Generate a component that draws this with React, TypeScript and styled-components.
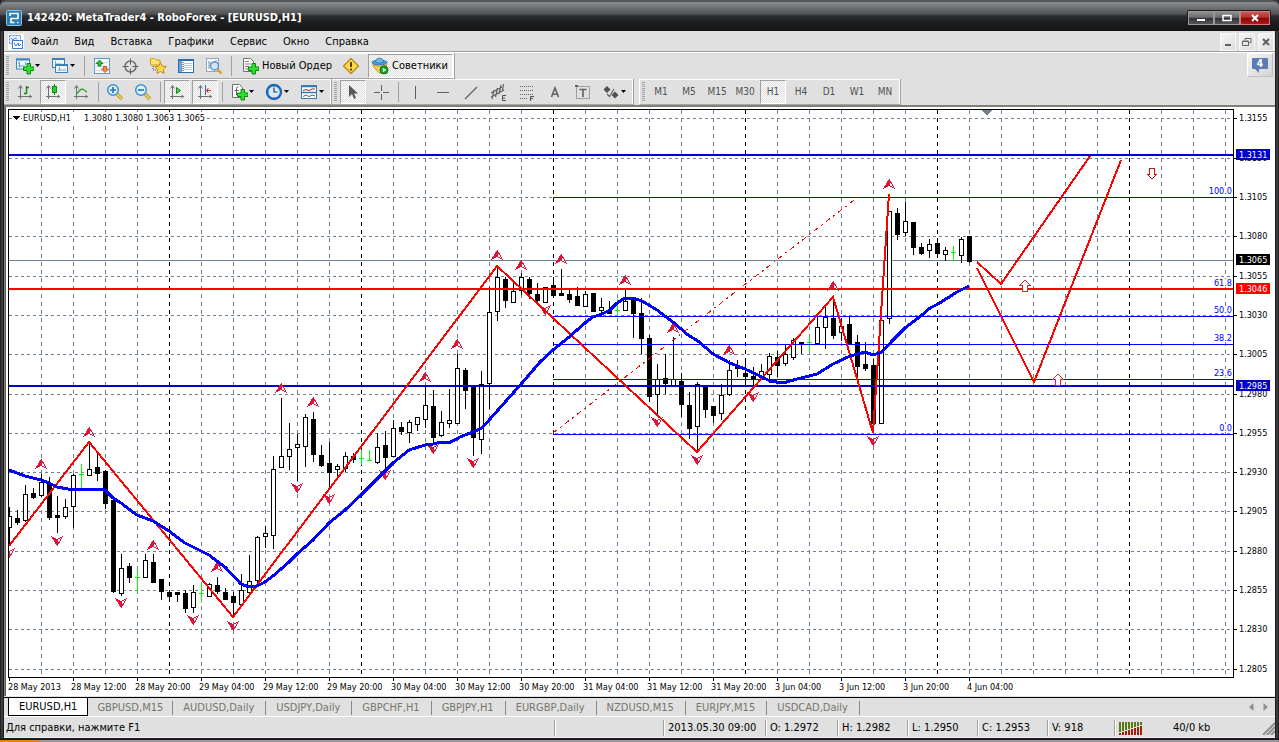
import React from 'react';
import styled, { createGlobalStyle, css } from 'styled-components';

const GlobalStyle = createGlobalStyle`
  *, *::before, *::after { box-sizing: border-box; }
  body { margin: 0; background: #1b1b1d; }
  button, input { font: inherit; }
`;

const uiFont = `'DejaVu Sans Condensed', 'DejaVu Sans', sans-serif`;

/* ---------- window frame ---------- */

const Window = styled.div`
  display: flex;
  flex-direction: column;
  min-height: 100vh;
  padding: 0 4px;
  background: linear-gradient(90deg, #141416 0, #4a4a4d 2px, #0d0d0f 4px, #0d0d0f calc(100% - 4px), #4a4a4d calc(100% - 2px), #141416 100%);
  font-family: ${uiFont};
  font-size: 11px;
  color: #000;
`;

const TitleBar = styled.header`
  display: flex;
  align-items: center;
  height: 31px;
  margin: 0 -4px;
  padding: 2px 8px 0 6px;
  gap: 5px;
  border-top: 2px solid #55565a;
  border-radius: 6px 6px 0 0;
  background: linear-gradient(#8a8b8d 0, #77787a 4px, #515254 12px, #2c2d2e 14px, #1d1e1f 20px, #141415 100%);
  color: #fff;
`;

const TitleText = styled.h1`
  flex: 1;
  margin: 0;
  font-size: 11px;
  font-weight: bold;
  line-height: 16px;
  white-space: nowrap;
`;

const WindowButtons = styled.div`
  display: flex;
  padding: 1px;
  border-radius: 2px;
  background: #1a1a1b;
`;

const WindowButton = styled.button<{ $close?: boolean }>`
  display: flex;
  align-items: center;
  justify-content: center;
  width: ${p => (p.$close ? 30 : 26)}px;
  height: 14px;
  padding: 0;
  border: 1px solid ${p => (p.$close ? '#d87878' : '#9a9a9c')};
  background: ${p =>
    p.$close
      ? 'linear-gradient(#c65a5a 0, #b03030 45%, #8c0404 50%, #b01818 100%)'
      : 'linear-gradient(#8d8e90 0, #6a6b6d 45%, #303133 50%, #55565a 100%)'};
`;

const Face = styled.div`
  display: flex;
  flex-direction: column;
  flex: 1;
  background: #e0e0e0;
`;

/* ---------- menu ---------- */

const MenuBar = styled.nav`
  display: flex;
  align-items: center;
  height: 22px;
  padding: 0 1px 0 4px;
  border-bottom: 1px solid #fff;
  box-shadow: inset 0 -1px 0 #9c9c9c;
`;

const MenuItem = styled.button`
  height: 19px;
  padding: 0 8px;
  border: 0;
  background: none;
  line-height: 16px;
  white-space: nowrap;
  &:first-of-type { padding-left: 7px; }
`;

const Spacer = styled.div`
  flex: 1;
`;

const ChildButtons = styled.div`
  display: flex;
  gap: 3px;
`;

const ChildButton = styled.button`
  display: flex;
  align-items: center;
  justify-content: center;
  width: 16px;
  height: 18px;
  padding: 0;
  border: 1px solid #f8f8f8;
  background: linear-gradient(135deg, #f6f6f6, #dcdcdc);
`;

/* ---------- toolbars ---------- */

const ToolbarRow = styled.div`
  display: flex;
  height: 26px;
`;

const Toolbar = styled.div`
  display: flex;
  align-items: center;
  height: 26px;
  padding: 0 1px 0 2px;
  border-right: 1px solid #a0a0a0;
  border-bottom: 1px solid #a6a6a6;
  box-shadow: inset -1px 0 0 #fff, inset 0 1px 0 #fff;
`;

const TimeframeBar = styled(Toolbar)`
  margin-left: 5px;
  border-left: 1px solid #fff;
`;

const Grip = styled.span`
  width: 3px;
  height: 20px;
  margin-right: 2px;
  background: repeating-linear-gradient(#a0a0a0 0 1px, #e0e0e0 1px 2px);
`;

const Separator = styled.span<{ $wide?: boolean }>`
  display: flex;
  justify-content: center;
  width: ${p => (p.$wide ? 7 : 6)}px;
  height: 20px;
  &::before { content: ''; width: 1px; background: #a0a0a0; }
`;

const pressed = css`
  background: repeating-conic-gradient(#fafafa 0 25%, #e0e0e0 0 50%) 0 0 / 2px 2px;
  border-color: #a0a0a0 #fff #fff #a0a0a0;
`;

const ToolButton = styled.button<{ $pressed?: boolean }>`
  display: flex;
  align-items: center;
  justify-content: center;
  width: 26px;
  height: 24px;
  margin: 0 1px;
  padding: 0;
  border: 1px solid transparent;
  background: none;
  ${p => p.$pressed && pressed}
`;

const DropButton = styled.button`
  display: flex;
  align-items: center;
  gap: 1px;
  width: 35px;
  height: 24px;
  padding: 0 0 0 5px;
  border: 0;
  background: none;
`;

const LabelButton = styled.button<{ $pressed?: boolean }>`
  display: flex;
  align-items: center;
  gap: 3px;
  height: 24px;
  margin-left: 3px;
  padding: 0 4px 0 2px;
  border: 1px solid transparent;
  background: none;
  white-space: nowrap;
  ${p => p.$pressed && pressed}
`;

const TimeButton = styled(ToolButton)`
  color: #505050;
  font-size: 10px;
`;

const AlertButton = styled.button`
  display: flex;
  align-items: center;
  justify-content: center;
  width: 26px;
  height: 24px;
  margin-right: 2px;
  padding: 0;
  border: 1px solid #c0c0c0;
  border-top-color: #fff;
  border-left-color: #fff;
  background: linear-gradient(135deg, #f4f4f4, #d4d4d4);
`;

/* ---------- chart and tabs ---------- */

const ChartFrame = styled.main`
  padding: 0 2px 0 4px;
  border-top: 2px solid #808078;
  background: linear-gradient(90deg, #808078 0 1px, #5c5c54 1px 2px, #fff 2px);
`;

const Chart = styled.svg`
  display: block;
  width: 100%;
  height: auto;
  background: #fff;
  font-family: ${uiFont};
  font-size: 9px;
`;

const Tabs = styled.nav`
  display: flex;
  height: 21px;
  padding: 1px 0 0 4px;
  border-top: 1px solid #e4e4e4;
  box-shadow: inset 0 1px 0 #000;
  border-bottom: 1px solid #fff;
`;

const Tab = styled.button<{ $active?: boolean }>`
  height: 19px;
  padding: 0;
  border: 0;
  background: none;
  color: #76766a;
  white-space: nowrap;
  span { display: block; padding: 0 11px 0 10px; border-right: 1px solid #8a8a80; line-height: 14px; }
  ${p =>
    p.$active &&
    css`
      height: 18px;
      border: 1px solid #000;
      border-top: 0;
      background: #fff;
      color: #000;
      span { padding: 0 10px; border: 0; }
      & + button span { padding: 0 9px; }
    `}
`;

const TabScroll = styled.div`
  display: flex;
  align-items: center;
  gap: 9px;
  margin-left: auto;
  padding-right: 7px;
`;

const ScrollButton = styled.button`
  display: flex;
  padding: 0;
  border: 0;
  background: none;
`;

const StatusBar = styled.footer`
  display: grid;
  grid-template-columns: 1fr 109px 102px 72px 70px 70px 70px 67px 161px;
  align-items: center;
  height: 21px;
  padding-top: 2px;
  border-bottom: 1px solid #f0f0f0;
`;

const StatusCell = styled.div`
  display: flex;
  align-items: center;
  height: 16px;
  padding-left: 4px;
  border-left: 1px solid #a0a0a0;
  box-shadow: inset 1px 0 0 #fff;
  white-space: nowrap;
  line-height: 14px;
  &:first-child { padding-left: 2px; border: 0; box-shadow: none; }
`;

const Traffic = styled.span`
  flex: 1;
  padding-left: 30px;
`;

const BottomEdge = styled.div`
  height: 4px;
  margin: 0 -4px;
  background: linear-gradient(90deg, #e08020 39px, #98949a 39px) 0 100% / 100% 2px no-repeat #1a1a1c;
`;

/* ---------- icons ---------- */

const Ico = ({ children, size = 18 }: { children: React.ReactNode; size?: number }) => (
  <svg width={size} height={size} viewBox="0 0 18 18" aria-hidden="true">{children}</svg>
);

const Caret = () => (
  <svg width="5" height="3" viewBox="0 0 5 3" aria-hidden="true"><path d="M0 0h5L2.500 3z" fill="#000" /></svg>
);

const Plus = () => (
  <path d="M11 6.500h3.500v3.500H18v3.500h-3.500V17H11v-3.500H7.500V10H11z" fill="#2fe02f" stroke="#0b8a12" />
);

const AppLogo = () => (
  <svg width="16" height="16" viewBox="0 0 16 16" aria-hidden="true">
    <rect x=".5" y=".5" width="15" height="15" rx="1" fill="#2b7db4" stroke="#8cc4e4" />
    <path d="M4 6V3.500h8v5H5v4h3.500M11 12.500h1.500" fill="none" stroke="#fff" strokeWidth="1.600" />
  </svg>
);

const ChildLogo = () => (
  <svg width="16" height="16" viewBox="0 0 16 16" aria-hidden="true">
    <rect width="16" height="16" fill="#fff" />
    <rect x="1.500" y="1.500" width="11" height="8" fill="#e8f1fd" stroke="#4c8be0" strokeDasharray="2 1" />
    <path d="M3 4l2 2 2-2 2 1" fill="none" stroke="#4c8be0" />
    <rect x="4.500" y="6.500" width="10" height="8" fill="#fff" stroke="#3c7cdc" />
    <path d="M6 9l2 3 2-3 1 3 2-2" fill="none" stroke="#3c7cdc" />
  </svg>
);

const NewChartIcon = () => (
  <Ico>
    <rect x=".5" y="2" width="13" height="10" fill="#eef6fd" stroke="#3f86c0" />
    <path d="M0 2.500h14" stroke="#3f86c0" strokeWidth="2" />
    <path d="M3.500 4.500v6M2 6h2M2 9h7M9.500 5v3" stroke="#6aa0cc" />
    <Plus />
  </Ico>
);

const ProfilesIcon = () => (
  <Ico>
    <rect x="1.500" y="1.500" width="12" height="9" fill="#eef6fd" stroke="#3f7fb8" />
    <path d="M1 2h13" stroke="#3f7fb8" strokeWidth="2" />
    <path d="M4 7h6M4.500 4v5" stroke="#7aa6cc" />
    <rect x="4.500" y="7.500" width="12" height="8" fill="#eef6fd" stroke="#3f7fb8" />
    <path d="M4 8h13" stroke="#3f7fb8" strokeWidth="2" />
    <path d="M7 13h8M8.500 10v4" stroke="#7aa6cc" />
  </Ico>
);

const MarketIcon = () => (
  <Ico>
    <rect x="1.500" y="1.500" width="15" height="15" fill="#f6faff" stroke="#5a9ad0" />
    <path d="M1.500 5.500h15M1.500 9.500h15M1.500 13.500h15" stroke="#d2e0ec" />
    <path d="M6.500 3L10 6.500H8V9H5V6.500H3z" fill="#2ec02e" stroke="#0a7a10" strokeWidth=".8" />
    <path d="M12 15.500L8.500 12h2V9.500h3V12h2z" fill="#ff8a3c" stroke="#c04010" strokeWidth=".8" />
  </Ico>
);

const TargetIcon = () => (
  <Ico>
    <circle cx="9.500" cy="9.500" r="5.500" fill="none" stroke="#707070" strokeWidth="1.500" />
    <path d="M9.500 1.500v6M9.500 11.500v6M1.500 9.500h6M11.500 9.500h6" stroke="#606060" />
  </Ico>
);

const NavigatorIcon = () => (
  <Ico>
    <path d="M1.500 3V1.500h4L7 3h4v5H1.500z" fill="#ffe27a" stroke="#d09a10" />
    <path d="M4 9v4h4" fill="none" stroke="#505050" strokeDasharray="1 1" />
    <path d="M11.500 5.500l1.800 3.600 4 .5-2.900 2.800.8 4-3.700-2-3.600 2 .7-4L5.800 9.600l4-.5z" fill="#ffd84c" stroke="#c08a10" />
  </Ico>
);

const TerminalIcon = () => (
  <Ico>
    <rect x="1.500" y="2.500" width="15" height="13" fill="#fff" stroke="#2c6cb0" />
    <path d="M1 3h16" stroke="#2c6cb0" strokeWidth="2" />
    <rect x="2" y="4" width="3" height="11" fill="#6aa6dc" />
    <path d="M7 6.500h8M7 8.500h8M7 10.500h8M7 12.500h8" stroke="#b4c8dc" />
    <path d="M6 5v10" stroke="#202020" strokeDasharray="1 1" />
  </Ico>
);

const TesterIcon = () => (
  <Ico>
    <rect x="1.500" y="1.500" width="12" height="13" fill="#f4f8fc" stroke="#90a8bc" />
    <path d="M4 4v8M4 6h3M11 3v5" stroke="#8898a8" />
    <path d="M12.500 12.500l4 4" stroke="#d8a830" strokeWidth="2.500" />
    <circle cx="9.500" cy="9" r="4" fill="#cfe6f8" stroke="#5a94c8" strokeWidth="1.500" />
  </Ico>
);

const OrderIcon = () => (
  <Ico>
    <path d="M2.500 1.500h7l3 3v10h-10z" fill="#fff" stroke="#707070" />
    <path d="M4 4.500h4M4 7h6M4 9.500h4M4 12h3" stroke="#808080" />
    <Plus />
  </Ico>
);

const WarningIcon = () => (
  <Ico>
    <path d="M9 1.500L16.500 9 9 16.500 1.500 9z" fill="#ffd84c" stroke="#b8901c" strokeWidth="1.500" strokeLinejoin="round" />
    <path d="M9 5v5M9 11.500v2" stroke="#604008" strokeWidth="2" />
  </Ico>
);

const ExpertsIcon = () => (
  <Ico>
    <path d="M1.500 7.500c3 2 11 2 14.500 0l-3 7c-1.500 2-5 2-6.500 0z" fill="#f4d04c" stroke="#c09820" />
    <ellipse cx="8.500" cy="5.500" rx="7.500" ry="2.300" fill="#4ea2d8" stroke="#2a78b0" />
    <path d="M4.500 5C5 0 12 0 12.500 5 10 6.500 7 6.500 4.500 5z" fill="#6cbce8" stroke="#2a78b0" />
    <circle cx="13" cy="13" r="4" fill="#16a026" stroke="#0a7a16" />
    <path d="M11.800 10.800v4.400L15.300 13z" fill="#fff" />
  </Ico>
);

const Axes = () => <path d="M4.500 3v13M2.500 5.500l2-3 2 3M2 13.500h14M13.500 12l2 1.500-2 1.500" fill="none" stroke="#707070" />;

const BarsIcon = () => <Ico><Axes /><path d="M10.500 3v8M8 10.500h2.500M10.500 4.500H13" stroke="#148a1c" strokeWidth="1.500" /></Ico>;
const CandleIcon = () => <Ico><Axes /><path d="M10.500 1v11" stroke="#148a1c" /><rect x="8.500" y="3.500" width="4" height="6" fill="#2ad02a" stroke="#148a1c" /></Ico>;
const LineIcon = () => <Ico><Axes /><path d="M4 11c2-1 3-4 6-5 2 0 3 2 5 3" fill="none" stroke="#38a83c" strokeWidth="1.400" /></Ico>;
const ScrollIcon = () => <Ico><Axes /><path d="M8.500 4.500l4 3-4 3z" fill="#4cd04c" stroke="#148a1c" /></Ico>;
const ShiftIcon = () => <Ico><Axes /><path d="M9.500 2v10" stroke="#2c6cc0" /><path d="M10 7.500h5M12.500 5L10.500 7.500l2 2.500" fill="none" stroke="#c03010" /></Ico>;

const ZoomIcon = ({ plus }: { plus?: boolean }) => (
  <Ico>
    <path d="M11 11l5 5" stroke="#c09a20" strokeWidth="3.500" />
    <path d="M11 11l5 5" stroke="#f4d860" strokeWidth="1.500" />
    <circle cx="7" cy="7" r="5.300" fill="#dcf0ff" stroke="#3c90d8" strokeWidth="1.500" />
    <path d={plus ? 'M4 7h6M7 4v6' : 'M4 7h6'} stroke="#2a70b8" strokeWidth="1.600" />
  </Ico>
);

const IndicatorIcon = () => (
  <Ico>
    <path d="M2.500 1.500h7l3 3v10h-10z" fill="#fff" stroke="#707070" />
    <path d="M8.500 4C6.500 3.500 6.500 5 6.500 7v5M4.500 7.500h4" fill="none" stroke="#606060" />
    <Plus />
  </Ico>
);

const ClockIcon = () => (
  <Ico>
    <circle cx="9" cy="9" r="7" fill="#d4eafc" stroke="#1c68b8" strokeWidth="2.400" />
    <path d="M9 4.500V9h3.500" fill="none" stroke="#404040" strokeWidth="1.200" />
    <path d="M9 3v1M9 14v1M3 9h1" stroke="#606060" />
  </Ico>
);

const TemplateIcon = () => (
  <Ico>
    <rect x="1.500" y="2.500" width="15" height="13" fill="#fff" stroke="#3878b8" />
    <path d="M1 3.500h16M2 9.500h14" stroke="#3878b8" strokeWidth="1.500" />
    <path d="M3 7.500l3-1 3 1 3-1.500h3" fill="none" stroke="#a02818" />
    <path d="M3 13.500l3-1.500 3 1.500 3-1.500 3 1" fill="none" stroke="#288838" />
  </Ico>
);

const CursorIcon = () => <Ico><path d="M5 2v12l3-3 2 5 2-1-2-4.500h4z" fill="#585858" /></Ico>;
const CrossIcon = () => <Ico><path d="M9.500 2v6M9.500 11v6M2 9.500h6M11 9.500h6" stroke="#606060" /></Ico>;
const VLineIcon = () => <Ico><path d="M9.500 3v13" stroke="#606060" /></Ico>;
const HLineIcon = () => <Ico><path d="M3 9.500h12" stroke="#606060" /></Ico>;
const TrendIcon = () => <Ico><path d="M3 16L15 4" stroke="#606060" strokeWidth="1.200" /></Ico>;
const ChannelIcon = () => (
  <Ico>
    <path d="M1 10L12 4M1 14L14 7M4 7L2 16M7.500 5l-2 9M11 2L9 11M13.500 1l-1 7" stroke="#606060" strokeWidth="1.200" />
    <path d="M16 12.500h-3.500v5H16M12.500 15H15" fill="none" stroke="#505050" />
  </Ico>
);
const FiboIcon = () => (
  <Ico>
    <path d="M2 3.500h14M2 7.500h14M2 11.500h14M2 15.500h8" stroke="#606060" strokeDasharray="1 1" />
    <path d="M16 13.500h-3.500V18M12.500 15.500H15" fill="none" stroke="#505050" />
  </Ico>
);
const TextIcon = () => <Ico><path d="M5.500 14L9 5l3.500 9M6.800 11.300h4.400" fill="none" stroke="#606060" strokeWidth="1.600" /></Ico>;
const LabelIcon = () => (
  <Ico>
    <rect x="2.500" y="3.500" width="13" height="12" fill="none" stroke="#606060" strokeDasharray="1 1" />
    <path d="M5.500 6.500h7M9 6.500V14" stroke="#606060" strokeWidth="1.600" />
    <path d="M1 2h3v2H1z" fill="#606060" />
  </Ico>
);
const ArrowsIcon = () => (
  <Ico>
    <path d="M5 3l3.500 3.500L5 10 1.500 6.500zM13 8.500l3.500 3.500-3.500 3.500L9.500 12z" fill="#505050" />
    <path d="M5 11l2.500 2.500L12 6" fill="none" stroke="#606060" strokeWidth="1.200" />
  </Ico>
);

/* ---------- chart data ---------- */

const barX = (i: number) => 9 + 8 * i;

/* high, body top, body bottom, low, kind: w = rising, b = falling, g = unchanged */
type Candle = [number, number, number, number, 'w' | 'b' | 'g'];

const candles: Candle[] = [
  [507, 516, 527, 546, 'w'], [510, 518, 522, 525, 'b'], [485, 494, 520, 522, 'w'], [488, 493, 497, 499, 'b'],
  [474, 482, 495, 497, 'w'], [477, 483, 517, 520, 'b'], [496, 515, 517, 533, 'b'], [499, 507, 516, 519, 'w'],
  [474, 475, 506, 528, 'w'], [464, 474, 474, 489, 'g'], [443, 469, 475, 475, 'w'], [453, 467, 473, 481, 'b'],
  [470, 471, 503, 509, 'b'], [500, 500, 591, 593, 'b'], [554, 568, 593, 596, 'w'], [563, 566, 577, 583, 'b'],
  [570, 577, 577, 593, 'g'], [554, 560, 577, 578, 'w'], [554, 562, 582, 582, 'b'], [579, 579, 591, 600, 'b'],
  [591, 592, 596, 600, 'b'], [592, 592, 594, 602, 'b'], [590, 593, 608, 613, 'b'], [585, 592, 607, 613, 'w'],
  [583, 593, 593, 603, 'g'], [583, 584, 596, 597, 'w'], [577, 585, 591, 594, 'b'], [588, 592, 599, 600, 'b'],
  [592, 596, 602, 617, 'b'], [574, 590, 604, 605, 'w'], [555, 581, 592, 594, 'w'], [536, 537, 580, 586, 'w'],
  [526, 533, 536, 548, 'w'], [456, 469, 535, 549, 'w'], [398, 456, 467, 467, 'w'], [423, 449, 456, 470, 'w'],
  [434, 444, 447, 481, 'w'], [414, 417, 446, 467, 'w'], [412, 419, 454, 462, 'b'], [445, 455, 465, 467, 'b'],
  [442, 463, 472, 490, 'b'], [464, 466, 469, 477, 'w'], [452, 456, 468, 472, 'w'], [453, 456, 459, 463, 'b'],
  [450, 458, 458, 465, 'g'], [450, 460, 460, 461, 'g'], [433, 447, 462, 464, 'w'], [431, 445, 457, 468, 'b'],
  [420, 428, 456, 457, 'w'], [422, 427, 431, 435, 'b'], [420, 422, 432, 443, 'w'], [417, 417, 424, 431, 'w'],
  [387, 405, 419, 428, 'w'], [390, 406, 437, 442, 'b'], [411, 422, 435, 437, 'w'], [389, 420, 423, 428, 'w'],
  [354, 368, 423, 423, 'w'], [368, 370, 390, 409, 'b'], [386, 386, 437, 456, 'b'], [371, 384, 439, 454, 'w'],
  [287, 312, 383, 409, 'w'], [267, 277, 311, 321, 'w'], [277, 279, 300, 308, 'b'], [283, 291, 302, 303, 'w'],
  [273, 277, 290, 295, 'w'], [277, 279, 293, 299, 'b'], [283, 294, 300, 302, 'b'], [287, 287, 302, 303, 'w'],
  [277, 285, 295, 295, 'b'], [269, 293, 295, 295, 'b'], [289, 294, 299, 303, 'b'], [287, 296, 305, 306, 'b'],
  [291, 294, 306, 307, 'w'], [293, 293, 311, 311, 'b'], [298, 307, 310, 313, 'w'], [301, 311, 313, 313, 'b'],
  [299, 310, 310, 316, 'g'], [290, 301, 310, 311, 'w'], [299, 300, 313, 338, 'b'], [298, 313, 338, 354, 'b'],
  [335, 338, 396, 402, 'b'], [364, 379, 394, 414, 'w'], [354, 378, 383, 394, 'b'], [337, 379, 385, 387, 'w'],
  [373, 381, 404, 417, 'b'], [392, 405, 428, 439, 'b'], [382, 384, 426, 451, 'w'], [387, 387, 409, 418, 'b'],
  [406, 406, 415, 423, 'b'], [384, 395, 413, 420, 'w'], [360, 370, 394, 396, 'w'], [360, 365, 368, 377, 'b'],
  [359, 373, 376, 386, 'b'], [367, 376, 379, 385, 'b'], [364, 371, 377, 378, 'w'], [353, 356, 374, 383, 'w'],
  [351, 357, 365, 377, 'b'], [345, 354, 363, 366, 'w'], [338, 340, 357, 360, 'w'], [342, 342, 344, 354, 'b'],
  [337, 342, 342, 352, 'g'], [317, 327, 343, 345, 'w'], [304, 317, 327, 349, 'w'], [297, 318, 335, 339, 'b'],
  [318, 326, 332, 341, 'w'], [317, 324, 344, 344, 'b'], [335, 342, 366, 380, 'b'], [342, 364, 368, 371, 'b'],
  [359, 365, 423, 433, 'b'], [320, 320, 423, 423, 'w'], [211, 211, 318, 324, 'w'], [208, 213, 234, 240, 'b'],
  [202, 221, 232, 236, 'w'], [222, 222, 247, 255, 'b'], [243, 247, 253, 255, 'b'], [239, 244, 250, 258, 'w'],
  [239, 243, 253, 256, 'b'], [247, 250, 254, 261, 'w'], [246, 252, 252, 261, 'g'], [237, 239, 255, 263, 'w'],
  [236, 236, 261, 263, 'b'],
];

const movingAverage =
  '9,470 25,476 41,480 49,483 57,487 73,490 89,489 105,490 113,498 121,503 137,515 145,518 153,521 169,531 185,543 209,555 225,567 241,584 249,587 257,586 265,582 273,576 289,562 297,554 313,540 329,523 345,510 361,495 383,473 393,463 409,450 425,445 433,444 441,442 449,443 460,437 473,432 482,428 490,419 506,401 522,383 540,362 553,350 568,338 585,323 593,317 602,314 610,310 617,303 625,298 633,298 642,301 657,310 673,322 688,335 698,341 713,354 730,363 745,369 760,376 770,381 783,383 797,379 817,374 833,364 850,356 865,352 873,355 882,352 893,340 905,328 922,315 930,308 938,304 957,292 969,286';

const zigzag = '9,546 89,442 233,617 497,266 697,452 833,297 873,433 889,194';

const highs = [[41, 464], [89, 432], [153, 545], [217, 567], [281, 388], [313, 402], [425, 377], [457, 344], [497, 255], [521, 265], [561, 259], [625, 280], [673, 328], [729, 350], [833, 286], [889, 184]];
const lows = [[9, 553], [57, 541], [121, 603], [193, 620], [233, 626], [297, 488], [329, 499], [385, 475], [433, 449], [473, 463], [545, 310], [657, 422], [697, 460], [753, 397], [873, 441]];

const priceTicks: [number, string][] = [
  [118, '1.3155'], [158, '1.3130'], [197, '1.3105'], [236, '1.3080'], [276, '1.3055'], [315, '1.3030'], [354, '1.3005'], [394, '1.2980'],
  [433, '1.2955'], [472, '1.2930'], [511, '1.2905'], [551, '1.2880'], [590, '1.2855'], [629, '1.2830'], [669, '1.2805'],
];

const dates = [
  '28 May 2013', '28 May 12:00', '28 May 20:00', '29 May 04:00', '29 May 12:00', '29 May 20:00', '30 May 04:00', '30 May 12:00',
  '30 May 20:00', '31 May 04:00', '31 May 12:00', '31 May 20:00', '3 Jun 04:00', '3 Jun 12:00', '3 Jun 20:00', '4 Jun 04:00',
];

const fibLevels: [number, string, boolean][] = [
  [197, '100.0', true], [289, '61.8', false], [316, '50.0', true], [344, '38.2', true], [379, '23.6', true], [434, '0.0', true],
];

const priceTags: [number, string, string][] = [
  [155, '1.3131', '#0000c8'], [260, '1.3065', '#000'], [289, '1.3046', '#f00'], [386, '1.2985', '#0000c8'],
];

const verticals = Array.from({ length: 38 }, (_, k) => 41 + 32 * k).filter(x => x < 1233);
const isDayStart = (x: number) => (x - 169) % 192 === 0;

const CandleShape = ({ i, c: [high, top, bottom, low, kind] }: { i: number; c: Candle }) => {
  const x = barX(i);
  if (kind === 'g') {
    return <path d={`M${x + 0.5} ${high}V${low}M${x - 2} ${top + 0.5}h5`} stroke="#0f0" />;
  }
  const height = Math.max(bottom - top, 2);
  return (
    <g stroke="#000">
      <path d={`M${x + 0.5} ${high}V${low}`} />
      <rect x={x - 1.5} y={top + 0.5} width="4" height={height} fill={kind === 'w' ? '#fff' : '#000'} />
    </g>
  );
};

const Fractal = ({ x, y, down }: { x: number; y: number; down?: boolean }) => (
  <g transform={`translate(${x} ${y})${down ? ' scale(1 -1)' : ''}`}>
    <path d="M0 -5L-6 5L0 2Z" fill="#dc143c" />
    <path d="M0.500 -4L5.500 4.500L0.500 1.500Z" fill="#fff" stroke="#dc143c" strokeWidth="1" />
  </g>
);

const Signal = ({ x, y, down }: { x: number; y: number; down?: boolean }) => (
  <path
    d="M0 -6L5 -1H2.500V5H-2.500V-1H-5Z"
    transform={`translate(${x} ${y})${down ? ' scale(1 -1)' : ''}`}
    fill="#fff"
    stroke={down ? '#c81414' : '#dc2828'}
  />
);

const PriceChart = () => (
  <Chart viewBox="8 107 1265 589" role="img" aria-label="EURUSD,H1">
    <defs>
      <clipPath id="plot"><rect x="8" y="109" width="1226" height="568" /></clipPath>
    </defs>
    <g shapeRendering="crispEdges" fill="none">
      <g strokeDasharray="3 3">
        {priceTicks.map(([y]) => <path key={y} d={`M9 ${y + 0.5}H1233`} stroke="#708090" />)}
        {verticals.map(x => <path key={x} d={`M${x + 0.5} 110V677`} strokeDasharray="4 4" stroke={isDayStart(x) ? '#000' : '#708090'} />)}
      </g>
      <path d="M9 260.500H1233" stroke="#708090" />
      <g clipPath="url(#plot)">
        {candles.map((c, i) => <CandleShape key={i} i={i} c={c} />)}
        {fibLevels.map(([y, label, line]) => line && <path key={label} d={`M553 ${y + 0.5}H1233`} stroke="#00f" />)}
        {fibLevels.map(([y, label]) => <rect key={label} x={1232 - label.length * 6} y={y - 10} width={label.length * 6} height="8" fill="#fff" />)}
        <path d="M553 433L858 197" stroke="#f00" strokeDasharray="5 4 2 4" />
        <path d="M9 155H1233M9 386H1233" stroke="#0000d0" strokeWidth="2" />
        <path d="M9 289H1233" stroke="#f00" strokeWidth="2" />
        {highs.map(([x, y]) => <Fractal key={x} x={x} y={y} />)}
        {lows.map(([x, y]) => <Fractal key={x} x={x} y={y} down />)}
        <Signal x={1025} y={286} />
        <Signal x={1058} y={380} />
        <Signal x={1152} y={173} down />
        <polyline points={zigzag} stroke="#f00" strokeWidth="2" />
        <polyline points="977,262 1001,284 1090,156" stroke="#f00" strokeWidth="2" />
        <polyline points="977,268 1034,382 1121,160" stroke="#f00" strokeWidth="2" />
        <polyline points={movingAverage} stroke="#00f" strokeWidth="3" strokeLinejoin="round" />
      </g>
      <path d="M8.500 109.500H1233.500V677.500H8.500Z" stroke="#000" />
      <path d="M981 110h12l-6 5z" fill="#708090" />
      {priceTicks.map(([y]) => <path key={y} d={`M1234 ${y + 0.5}h3`} stroke="#000" />)}
      {dates.map((d, k) => <path key={d} d={`M${9.5 + 64 * k} 678v3`} stroke="#000" />)}
      <path d="M22 112h184v10H22z" fill="#fff" />
      <path d="M12 116h8l-4 4z" fill="#000" />
    </g>
    <text x="23" y="121">EURUSD,H1</text>
    <text x="84" y="121">1.3080 1.3080 1.3063 1.3065</text>
    {priceTicks.map(([y, label]) => <text key={label} x="1239" y={y + 3}>{label}</text>)}
    {fibLevels.map(([y, label]) => (
      <text key={label} x="1232" y={y - 3} textAnchor="end" fill="#00f">{label}</text>
    ))}
    {dates.map((d, k) => <text key={d} x={(k === 0 ? 8 : 7) + 64 * k} y="690">{d}</text>)}
    {priceTags.map(([y, label, color]) => (
      <g key={label}>
        <rect x="1236" y={y - 6} width="34" height="11" fill={color} />
        <text x="1239" y={y + 3} fill="#fff">{label}</text>
      </g>
    ))}
  </Chart>
);

/* ---------- page ---------- */

const menu = ['Файл', 'Вид', 'Вставка', 'Графики', 'Сервис', 'Окно', 'Справка'];
const timeframes = ['M1', 'M5', 'M15', 'M30', 'H1', 'H4', 'D1', 'W1', 'MN'];
const tabs = ['EURUSD,H1', 'GBPUSD,M15', 'AUDUSD,Daily', 'USDJPY,Daily', 'GBPCHF,H1', 'GBPJPY,H1', 'EURGBP,Daily', 'NZDUSD,M15', 'EURJPY,M15', 'USDCAD,Daily'];
const status = ['2013.05.30 09:00', 'O: 1.2972', 'H: 1.2982', 'L: 1.2950', 'C: 1.2953', 'V: 918'];

export default function App() {
  return (
    <>
      <GlobalStyle />
      <Window>
        <TitleBar>
          <AppLogo />
          <TitleText>142420: MetaTrader4 - RoboForex - [EURUSD,H1]</TitleText>
          <WindowButtons>
            <WindowButton aria-label="Minimize"><svg width="10" height="8"><path d="M1 6h8" stroke="#fff" strokeWidth="2" /></svg></WindowButton>
            <WindowButton aria-label="Maximize"><svg width="10" height="8"><path d="M1 1.500h8v5H1z" fill="none" stroke="#fff" strokeWidth="1.500" /></svg></WindowButton>
            <WindowButton $close aria-label="Close"><svg width="8" height="8"><path d="M1 1l6 6M7 1L1 7" stroke="#fff" strokeWidth="2" /></svg></WindowButton>
          </WindowButtons>
        </TitleBar>
        <Face>
          <MenuBar>
            <ChildLogo />
            {menu.map(m => <MenuItem key={m}>{m}</MenuItem>)}
            <Spacer />
            <ChildButtons>
              <ChildButton aria-label="Minimize chart"><svg width="10" height="10"><path d="M2 8h6" stroke="#606060" strokeWidth="2" /></svg></ChildButton>
              <ChildButton aria-label="Restore chart"><svg width="10" height="10"><path d="M3 3V1.500h6v4H7.500M.5 4.500h6v4h-6zM.5 4h6" fill="none" stroke="#606060" /></svg></ChildButton>
              <ChildButton aria-label="Close chart"><svg width="10" height="10"><path d="M2 2l6 6M8 2L2 8" stroke="#606060" strokeWidth="2" /></svg></ChildButton>
            </ChildButtons>
          </MenuBar>
          <ToolbarRow>
            <Toolbar>
              <Grip />
              <DropButton aria-label="New chart"><NewChartIcon /><Caret /></DropButton>
              <DropButton aria-label="Profiles"><ProfilesIcon /><Caret /></DropButton>
              <Separator $wide />
              <ToolButton aria-label="Market watch"><MarketIcon /></ToolButton>
              <ToolButton aria-label="Data window"><TargetIcon /></ToolButton>
              <ToolButton aria-label="Navigator"><NavigatorIcon /></ToolButton>
              <ToolButton aria-label="Terminal"><TerminalIcon /></ToolButton>
              <ToolButton aria-label="Strategy tester"><TesterIcon /></ToolButton>
              <Separator $wide />
              <LabelButton><OrderIcon />Новый Ордер</LabelButton>
              <ToolButton aria-label="MetaEditor"><WarningIcon /></ToolButton>
              <LabelButton $pressed><ExpertsIcon />Советники</LabelButton>
            </Toolbar>
            <Spacer />
            <AlertButton aria-label="Messages: 4">
              <svg width="18" height="18" viewBox="0 0 18 18">
                <path d="M1 3q0-1 1-1h14q1 0 1 1v9q0 1-1 1H8v4l-4-4H2q-1 0-1-1z" fill="#5a7cb4" />
                <text x="9" y="11" textAnchor="middle" fontSize="10" fontWeight="bold" fill="#fff">4</text>
              </svg>
            </AlertButton>
          </ToolbarRow>
          <ToolbarRow>
            <Toolbar>
              <Grip />
              <ToolButton aria-label="Bar chart"><BarsIcon /></ToolButton>
              <ToolButton $pressed aria-label="Candlesticks"><CandleIcon /></ToolButton>
              <ToolButton aria-label="Line chart"><LineIcon /></ToolButton>
              <Separator />
              <ToolButton aria-label="Zoom in"><ZoomIcon plus /></ToolButton>
              <ToolButton aria-label="Zoom out"><ZoomIcon /></ToolButton>
              <Separator />
              <ToolButton $pressed aria-label="Auto scroll"><ScrollIcon /></ToolButton>
              <ToolButton $pressed aria-label="Chart shift"><ShiftIcon /></ToolButton>
              <Separator />
              <DropButton aria-label="Indicators"><IndicatorIcon /><Caret /></DropButton>
              <DropButton aria-label="Periods"><ClockIcon /><Caret /></DropButton>
              <DropButton aria-label="Templates"><TemplateIcon /><Caret /></DropButton>
            </Toolbar>
            <Toolbar>
              <Grip />
              <ToolButton $pressed aria-label="Cursor"><CursorIcon /></ToolButton>
              <ToolButton aria-label="Crosshair"><CrossIcon /></ToolButton>
              <Separator />
              <ToolButton aria-label="Vertical line"><VLineIcon /></ToolButton>
              <ToolButton aria-label="Horizontal line"><HLineIcon /></ToolButton>
              <ToolButton aria-label="Trendline"><TrendIcon /></ToolButton>
              <ToolButton aria-label="Equidistant channel"><ChannelIcon /></ToolButton>
              <ToolButton aria-label="Fibonacci retracement"><FiboIcon /></ToolButton>
              <ToolButton aria-label="Text"><TextIcon /></ToolButton>
              <ToolButton aria-label="Text label"><LabelIcon /></ToolButton>
              <DropButton aria-label="Arrows"><ArrowsIcon /><Caret /></DropButton>
            </Toolbar>
            <TimeframeBar>
              <Grip />
              {timeframes.map(t => <TimeButton key={t} $pressed={t === 'H1'}>{t}</TimeButton>)}
            </TimeframeBar>
          </ToolbarRow>
          <ChartFrame><PriceChart /></ChartFrame>
          <Tabs>
            {tabs.map((t, i) => <Tab key={t} $active={i === 0}><span>{t}</span></Tab>)}
            <TabScroll>
              <ScrollButton aria-label="Previous tabs"><svg width="5" height="8"><path d="M4.500 0v8L0 4z" fill="#909090" /></svg></ScrollButton>
              <ScrollButton aria-label="Next tabs"><svg width="5" height="8"><path d="M.5 0v8L5 4z" fill="#909090" /></svg></ScrollButton>
            </TabScroll>
          </Tabs>
          <StatusBar>
            <StatusCell>Для справки, нажмите F1</StatusCell>
            <StatusCell />
            {status.map(s => <StatusCell key={s}>{s}</StatusCell>)}
            <StatusCell>
              <svg width="24" height="13" aria-hidden="true" shapeRendering="crispEdges">
                {Array.from({ length: 8 }, (_, k) => (
                  <g key={k}>
                    <rect x={k * 3} y="0" width="2" height={10 - k} fill="#5a7a14" />
                    <rect x={k * 3} y={11 - k} width="2" height={2 + k} fill="#a02010" />
                  </g>
                ))}
              </svg>
              <Traffic>40/0 kb</Traffic>
              <svg width="13" height="14" aria-hidden="true"><path d="M1 14L13 2M5 14l8-8M9 14l4-4" stroke="#909090" strokeWidth="2" /></svg>
            </StatusCell>
          </StatusBar>
        </Face>
        <BottomEdge />
      </Window>
    </>
  );
}
